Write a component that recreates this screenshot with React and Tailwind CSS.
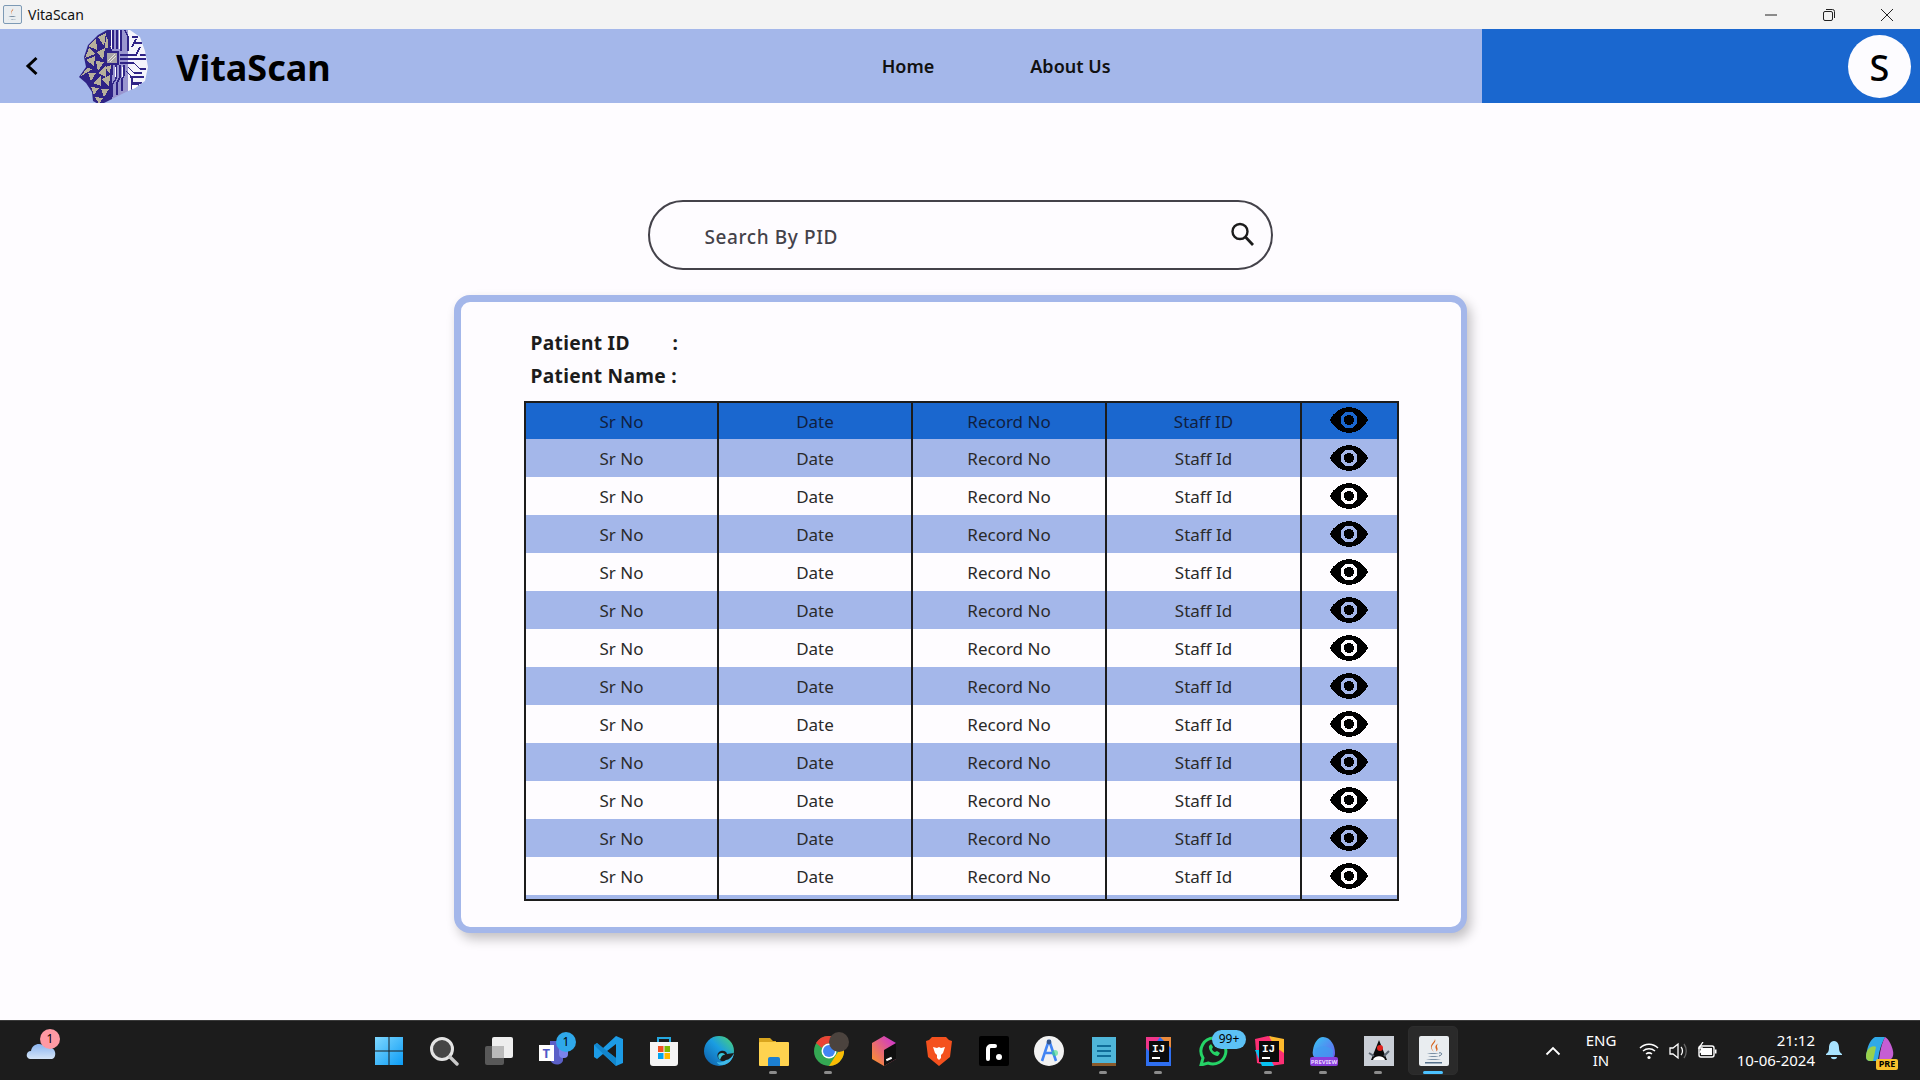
import React from "react";

const FONT = "font-['Noto_Sans',sans-serif]";

const rows = Array.from({ length: 12 }, (_, i) => i);
const COLS = "grid-cols-[193px_194px_194px_195px_95px]";

// Pixel-ish eye, the hole lets the row colour show through
const EyeIcon = () => (
    <svg width="38" height="26" viewBox="0 0 38 26" shapeRendering="crispEdges">
        <path
            fillRule="evenodd"
            d="M0 13C3 6 10 0 19 0s16 6 19 13c-3 7-10 13-19 13S3 20 0 13ZM19 4.500a8.500 8.500 0 1 0 0 17a8.500 8.500 0 1 0 0-17Z"
            fill="#000"
        />
        <circle cx="19" cy="13" r="5.200" fill="#000" />
    </svg>
);

const Logo = () => {
    const tris = [
        "28,19 36,11 37,23", "38,10 46,6 44,19", "25,31 29,21 35,27", "26,33 35,29 34,39",
        "37,25 45,21 43,33", "36,34 44,35 38,44", "21,49 27,41 33,42", "28,46 36,46 31,54",
        "38,46 46,38 46,50", "33,56 41,49 41,59", "42,52 50,48 49,60", "31,60 39,61 34,68",
        "41,62 49,62 44,70", "35,70 43,71 39,77", "46,9 51,20 45,21", "45,40 51,38 50,47",
    ];
    return (
        <svg width="110" height="80" viewBox="0 0 110 80" className="shrink-0" shapeRendering="crispEdges">
            <defs>
                <clipPath id="head">
                    <path d="M47 3 70 3 80 10 85 24 88 40 85 54 75 61 66 65 56 70 40 78 33 74 32 65 26 56 19 50 26 40 24 30 28 18 38 8Z" />
                </clipPath>
            </defs>
            <g clipPath="url(#head)">
                <rect x="15" y="0" width="37" height="80" fill="#2f2386" />
                {tris.map((p) => (
                    <polygon key={p} points={p} fill="#b7b09b" />
                ))}
                <rect x="52" y="0" width="16" height="80" fill="#9a96cf" />
                <rect x="68" y="0" width="24" height="80" fill="#f4f4fb" />
                <path
                    d="M49 3V24M53 3V22M57 3V22M61 3V24M65 3 68 10V24M56 38V52L52 58V70M60 38V50L57 56V68M64 38V48L62 52V64M52 38V48M60 28H76L80 20M60 32H86M60 36H74L80 42H86M68 40 74 46H82M66 44 72 50V60M70 50H84M76 12 72 20M80 28H86M72 56H82M72 10H78M74 16H82"
                    stroke="#2f2386"
                    strokeWidth="1.400"
                    fill="none"
                />
                <path d="M51 3V22M59 3V22M55 40V50M62 40V50" stroke="#fff" strokeWidth="1" fill="none" />
                <rect x="45" y="24" width="14" height="14" fill="#2f2386" />
                <rect x="47" y="26" width="10" height="10" fill="#a9a5a8" />
                <path d="M48 34 55 27M50 35 56 29" stroke="#e8e6e0" strokeWidth="1.200" />
                <rect x="71" y="57" width="7" height="5" fill="#fff" stroke="#2f2386" />
            </g>
        </svg>
    );
};

const Slot = ({ children, dot, active, badge }) => (
    <div className="relative flex h-[60px] w-[55px] shrink-0 items-center justify-center">
        {active && <div className="absolute left-[2px] top-[5px] h-[49px] w-[50px] rounded-[5px] border border-[#2d2d2d] bg-[#2a2a2a]" />}
        <div className="relative h-[30px] w-[30px]">{children}</div>
        {badge}
        {dot && <div className="absolute bottom-[7px] left-[23px] h-[3px] w-[8px] rounded-full bg-[#8c8c8c]" />}
        {active && <div className="absolute bottom-[7px] left-[17px] h-[3px] w-[20px] rounded-full bg-[#4cc2ff]" />}
    </div>
);

const Ico = ({ children }) => (
    <svg width="30" height="30" viewBox="0 0 30 30">
        {children}
    </svg>
);

const IdeaIcon = ({ multi }) => (
    <Ico>
        {multi ? (
            <>
                <polygon points="1,3 14,0 30,6 30,28 16,30 3,27" fill="#fc2f74" />
                <polygon points="15,0 30,3 30,17 20,10" fill="#fdb92c" />
                <polygon points="1,14 8,30 20,30 12,14" fill="#08c3f2" />
            </>
        ) : (
            <rect x="2" y="1" width="25" height="29" fill="#2f6ff0" />
        )}
        {!multi && <polygon points="2,1 16,1 6,16 2,12" fill="#f0368a" />}
        {!multi && <polygon points="16,1 27,1 27,12" fill="#ea8a3c" />}
        <rect x="5" y="5" width="20" height="21" fill="#0b0b0b" />
        <rect x="8" y="21" width="8" height="2" fill="#fff" />
        <text x="8" y="16" fontSize="11" fontWeight="700" fill="#fff" className="font-['Liberation_Mono',monospace]">
            IJ
        </text>
    </Ico>
);

const JavaIcon = () => (
    <Ico>
        <rect x="0" y="0" width="30" height="30" rx="2" fill="#e9edf0" />
        <path d="M16 3c2 4-5 6-3 10 1 2 2 3 2 3-3-3-4-5-2-8 1-2 3-3 3-5Z" fill="#d8631d" />
        <path d="M20 7c-4 2-4 4-3 6 1 1 0 3-1 3 3-1 3-3 2-5 0-2 0-3 2-4Z" fill="#d8631d" />
        <path d="M8 17h12c-2 1-10 1-12 0ZM9 20h11c-2 1-9 1-11 0ZM7 23h15c-3 1-12 1-15 0Z" fill="#55708a" />
        <path d="M20 17c3-1 4 2 0 3" stroke="#55708a" fill="none" />
        <rect x="6" y="26" width="17" height="1.500" fill="#55708a" />
    </Ico>
);

const Taskbar = () => (
    <div className={`flex h-[60px] shrink-0 items-center border-t border-[#3a3a3a] bg-[#1c1c1c] text-white ${FONT}`}>
        {/* Weather */}
        <div className="flex h-full w-[361px] shrink-0 items-center pl-[26px]">
            <div className="relative h-[30px] w-[30px]">
                <svg width="30" height="30" viewBox="0 0 30 30">
                    <defs>
                        <linearGradient id="cloud" x1="0" y1="0" x2="0" y2="1">
                            <stop offset="0" stopColor="#8ab4f0" />
                            <stop offset="1" stopColor="#d4e4f7" />
                        </linearGradient>
                    </defs>
                    <path d="M4 23c-5-1-4-8 1-8 1-8 11-9 14-4 5-1 9 1 10 5 1 4-1 7-3 7Z" fill="url(#cloud)" />
                </svg>
                <div className="absolute left-[14px] top-[-7px] flex h-[20px] w-[20px] items-center justify-center rounded-full bg-[#ff99a4] text-[12px] text-black">
                    1
                </div>
            </div>
        </div>

        {/* Start */}
        <Slot>
            <Ico>
                <defs>
                    <linearGradient id="win" x1="0" y1="0" x2="1" y2="1">
                        <stop offset="0" stopColor="#7fd8ff" />
                        <stop offset="1" stopColor="#0c9cf5" />
                    </linearGradient>
                </defs>
                <path d="M1 1h13.500v13.500H1ZM15.500 1H29v13.500H15.500ZM1 15.500h13.500V29H1ZM15.500 15.500H29V29H15.500Z" fill="url(#win)" />
            </Ico>
        </Slot>
        {/* Search */}
        <Slot>
            <Ico>
                <circle cx="13" cy="13" r="10.500" fill="#454545" stroke="#e4e4e4" strokeWidth="3" />
                <path d="M21 21l7 7" stroke="#c9c9c9" strokeWidth="3.400" strokeLinecap="round" />
            </Ico>
        </Slot>
        {/* Task view */}
        <Slot>
            <Ico>
                <rect x="1" y="10" width="19" height="19" rx="2" fill="#585858" />
                <rect x="8" y="1" width="21" height="21" rx="2" fill="#eeeeee" />
                <rect x="8" y="10" width="12" height="12" fill="#b9b9b9" />
            </Ico>
        </Slot>
        {/* Teams */}
        <Slot
            badge={
                <div className="absolute left-[30px] top-[11px] flex h-[20px] w-[20px] items-center justify-center rounded-full bg-[#2fa8ea] text-[12px] text-black">
                    1
                </div>
            }
        >
            <Ico>
                <path d="M11 5h13v19c0 5-10 7-13 0Z" fill="#5b60c7" />
                <rect x="20" y="10" width="9" height="12" rx="4" fill="#7b83eb" />
                <rect x="0" y="9" width="15" height="16" fill="#fff" />
                <text x="3.500" y="22" fontSize="13" fontWeight="700" fill="#5059c9">
                    T
                </text>
            </Ico>
        </Slot>
        {/* VS Code */}
        <Slot>
            <Ico>
                <path d="M22 0 29 3V27L22 30 9 18 3 23 0 21V9L3 7 9 12ZM22 8 13 15 22 22Z" fill="#1c9be6" />
                <path d="M0 9 3 7 22 22V30L0 9Z" fill="#0f7fc4" opacity="0.75" />
            </Ico>
        </Slot>
        {/* Store */}
        <Slot>
            <Ico>
                <path d="M9 6V2h12v4" fill="none" stroke="#25a8e0" strokeWidth="2" />
                <path d="M1 6h28v21a3 3 0 0 1-3 3H4a3 3 0 0 1-3-3Z" fill="#f4f4f4" />
                <rect x="9" y="10" width="5.500" height="6" fill="#f25022" />
                <rect x="15.500" y="10" width="5.500" height="6" fill="#7fba00" />
                <rect x="9" y="17" width="5.500" height="6" fill="#00a4ef" />
                <rect x="15.500" y="17" width="5.500" height="6" fill="#ffb900" />
            </Ico>
        </Slot>
        {/* Edge */}
        <Slot>
            <Ico>
                <defs>
                    <linearGradient id="edge" x1="0" y1="1" x2="1" y2="0">
                        <stop offset="0" stopColor="#0c59a4" />
                        <stop offset="0.55" stopColor="#1b9de2" />
                        <stop offset="1" stopColor="#4fd86a" />
                    </linearGradient>
                </defs>
                <circle cx="15" cy="15" r="15" fill="url(#edge)" />
                <path d="M30 17c-1 6-9 11-14 7-4-3-3-8 1-9 3-1 6 1 6 3 2 0 5-1 7-1Z" fill="#1c1c1c" />
                <path d="M16 24c-3-3-2-7 2-7 2 0 3 1 3 2-2-1-4 2-5 5Z" fill="#38c6d8" />
                <path d="M22 24c3 0 6-3 8-7-1 7-6 12-12 12-3 0-5-2-5-3 3 1 6 0 9-2Z" fill="#3fb9e8" />
            </Ico>
        </Slot>
        {/* Files */}
        <Slot dot>
            <Ico>
                <path d="M0 2h11l3 3h3v4H0Z" fill="#d9a51e" />
                <rect x="0" y="6" width="30" height="24" rx="1" fill="#ffd34f" />
                <path d="M9 23a2 2 0 0 1 2-2h8a2 2 0 0 1 2 2v7H9Z" fill="#1c7fd1" />
            </Ico>
        </Slot>
        {/* Chrome */}
        <Slot
            dot
            badge={<div className="absolute left-[28px] top-[11px] h-[20px] w-[20px] rounded-full bg-[#4b433e]" />}
        >
            <Ico>
                <circle cx="15" cy="15" r="15" fill="#34a853" />
                <path d="M15 0a15 15 0 0 1 13 7.500H15a7.500 7.500 0 0 0-7 4.500L2 7A15 15 0 0 1 15 0Z" fill="#ea4335" />
                <path d="M28 7.500a15 15 0 0 1-13 22.500l7-11a7.500 7.500 0 0 0 0-11.500Z" fill="#fbbc04" />
                <circle cx="15" cy="15" r="7.500" fill="#fff" />
                <circle cx="15" cy="15" r="6" fill="#4285f4" />
            </Ico>
        </Slot>
        {/* Toolbox */}
        <Slot>
            <Ico>
                <defs>
                    <linearGradient id="tb" x1="0" y1="1" x2="1" y2="0">
                        <stop offset="0" stopColor="#ff9a1f" />
                        <stop offset="1" stopColor="#c92ce0" />
                    </linearGradient>
                </defs>
                <polygon points="15,0 27,7 27,23 15,30 3,23 3,7" fill="url(#tb)" />
                <polygon points="15,14 27,7 27,23 15,30" fill="#0f0f0f" />
                <rect x="17" y="22" width="6" height="2" fill="#fff" transform="rotate(-25 20 23)" />
            </Ico>
        </Slot>
        {/* Brave */}
        <Slot>
            <Ico>
                <path d="M8 1h14l3 3 3 1-2 16-11 9-11-9L2 5l3-1Z" fill="#f4511e" />
                <path d="M9 11l4 1 2-1 2 1 4-1-2 6-2 2v3l-2 2-2-2v-3l-2-2Z" fill="#fff" />
            </Ico>
        </Slot>
        {/* r. */}
        <Slot>
            <Ico>
                <rect x="0" y="0" width="30" height="30" rx="2" fill="#000" />
                <path d="M9 23V13a3 3 0 0 1 3-3h4" fill="none" stroke="#fff" strokeWidth="4" strokeLinecap="round" />
                <circle cx="20" cy="21" r="3" fill="#fff" />
            </Ico>
        </Slot>
        {/* Android Studio */}
        <Slot>
            <Ico>
                <circle cx="15" cy="15" r="15" fill="#f2f2f2" />
                <path d="M15 4 8 25M15 4l7 21M10 17h10" fill="none" stroke="#4285f4" strokeWidth="2.600" />
                <circle cx="15" cy="6" r="2.400" fill="#34568b" />
                <circle cx="21" cy="17" r="3" fill="#3ddc84" opacity="0.6" />
            </Ico>
        </Slot>
        {/* Notepad */}
        <Slot dot>
            <Ico>
                <rect x="3" y="1" width="24" height="27" fill="#4fb6d9" />
                <rect x="3" y="27" width="24" height="3" fill="#8a5a2b" />
                <path d="M8 10h14M8 15h14M8 20h14" stroke="#0f6d99" strokeWidth="2" />
            </Ico>
        </Slot>
        <Slot dot>
            <IdeaIcon />
        </Slot>
        {/* WhatsApp */}
        <Slot
            badge={
                <div className="absolute left-[26px] top-[9px] flex h-[19px] w-[34px] items-center justify-center rounded-full bg-[#5cc1f5] text-[12px] text-black">
                    99+
                </div>
            }
        >
            <Ico>
                <path d="M15 2a13 13 0 0 0-11 20l-2 7 7-2A13 13 0 1 0 15 2Z" fill="none" stroke="#25d366" strokeWidth="3" />
                <path d="M10 10c-1 4 4 10 9 10l2-3-3-2-2 1c-1 0-3-2-3-3l1-2-2-3Z" fill="#25d366" />
            </Ico>
        </Slot>
        <Slot dot>
            <IdeaIcon multi />
        </Slot>
        {/* Edge preview */}
        <Slot dot>
            <Ico>
                <defs>
                    <linearGradient id="ep" x1="0" y1="0" x2="1" y2="1">
                        <stop offset="0" stopColor="#35c9f2" />
                        <stop offset="1" stopColor="#6a5cf0" />
                    </linearGradient>
                </defs>
                <path d="M14 1c8 0 12 9 12 16 0 3-1 5-3 6H7c-3-2-4-5-3-9C5 7 9 1 14 1Z" fill="url(#ep)" />
                <path d="M6 14c4-5 12-5 18 0v7H7Z" fill="#3f9df0" opacity="0.7" />
                <rect x="1" y="21" width="28" height="9" rx="2" fill="#8a3fdc" />
                <text x="15" y="28" textAnchor="middle" fontSize="6" fontWeight="700" fill="#e9d8ff">
                    PREVIEW
                </text>
            </Ico>
        </Slot>
        {/* Duke */}
        <Slot dot>
            <Ico>
                <rect x="0" y="0" width="30" height="30" fill="#c9ced6" />
                <path d="M15 4 23 24H7Z" fill="#0c0c0c" />
                <path d="M9 24c1-5 11-5 12 0Z" fill="#fff" />
                <circle cx="16" cy="12" r="3" fill="#e0211d" />
                <path d="M5 17l5 3M25 15l-5 5" stroke="#5a6470" strokeWidth="2" />
            </Ico>
        </Slot>
        <Slot active>
            <JavaIcon />
        </Slot>

        {/* Tray */}
        <div className="ml-[84px] flex h-full items-center">
            <svg width="16" height="10" viewBox="0 0 16 10" className="shrink-0">
                <path d="M1.500 8.500 8 2l6.500 6.500" fill="none" stroke="#fff" strokeWidth="1.800" />
            </svg>
            <div className="ml-[20px] w-[40px] pb-[2px] text-center text-[15px] leading-[20px]">
                <div>ENG</div>
                <div>IN</div>
            </div>
            <svg width="20" height="18" viewBox="0 0 20 18" className="ml-[18px] shrink-0">
                <path d="M1 6c5-5 13-5 18 0M4 9c3.500-3 8.500-3 12 0M7 12c2-1.500 4-1.500 6 0" fill="none" stroke="#fff" strokeWidth="1.500" />
                <circle cx="10" cy="15.500" r="1.600" fill="#fff" />
            </svg>
            <svg width="20" height="20" viewBox="0 0 20 20" className="ml-[10px] shrink-0">
                <path d="M1 7h3l5-4v14l-5-4H1Z" fill="none" stroke="#fff" strokeWidth="1.300" />
                <path d="M12 6c2 2 2 6 0 8" fill="none" stroke="#fff" strokeWidth="1.300" />
                <path d="M15 3c3 4 3 10 0 14" fill="none" stroke="#666" strokeWidth="1.300" />
            </svg>
            <svg width="20" height="18" viewBox="0 0 20 18" className="ml-[8px] shrink-0">
                <rect x="2" y="4" width="15" height="11" rx="2" fill="none" stroke="#fff" strokeWidth="1.400" />
                <rect x="4" y="6" width="11" height="7" fill="#fff" />
                <rect x="18" y="7.500" width="1.500" height="4" fill="#fff" />
                <path d="M6 0 2 6h3l-2 5" fill="none" stroke="#fff" strokeWidth="1.300" />
            </svg>
            <div className="ml-[10px] w-[88px] pb-[2px] text-right text-[15px] leading-[20px]">
                <div>21:12</div>
                <div>10-06-2024</div>
            </div>
            <svg width="18" height="24" viewBox="0 0 18 24" className="ml-[10px] shrink-0">
                <path d="M9 2c4 0 5 4 5 7 0 3 1 5 3 6v1H1v-1c2-1 3-3 3-6 0-3 1-7 5-7Z" fill="#a8e3ff" />
                <path d="M6 18h6c0 3-6 3-6 0Z" fill="#a8e3ff" />
            </svg>
            <div className="relative ml-[22px] h-[30px] w-[30px] shrink-0">
                <svg width="30" height="30" viewBox="0 0 30 30">
                    <path d="M10 1h10c-4 8-6 14-7 24H5C1 25 0 21 2 15 3 9 6 3 10 1Z" fill="#30a9e8" />
                    <path d="M2 15c2-4 7-6 9-4l-3 14H5C1 25 0 21 2 15Z" fill="#9ad14b" />
                    <path d="M20 1c4 2 7 9 8 14 1 5-1 9-5 9h-9c1-10 3-17 6-23Z" fill="#c55ed4" />
                </svg>
                <div className="absolute bottom-[-4px] right-[-3px] flex h-[11px] w-[22px] items-center justify-center rounded-[2px] bg-[#f8c12c] text-[9px] font-bold text-black">
                    PRE
                </div>
            </div>
        </div>
    </div>
);

const App = () => {
    return (
        <div className={`flex h-screen w-full flex-col overflow-hidden bg-[#fefcff] ${FONT}`}>
            {/* Window title bar */}
            <div className="flex h-[29px] shrink-0 items-center justify-between bg-[#f3f3f3]">
                <div className="flex items-center pl-[3px]">
                    <div className="h-[19px] w-[19px] rounded-[2px] border border-[#7d9ab5] bg-[#e9edf0] p-px">
                        <svg viewBox="0 0 30 30" width="15" height="15">
                            <path d="M16 3c2 4-5 6-3 10 1 2 2 3 2 3-3-3-4-5-2-8 1-2 3-3 3-5Z" fill="#d8631d" />
                            <path d="M7 18h15c-2 2-13 2-15 0ZM7 24h15c-3 1-12 1-15 0Z" fill="#55708a" />
                        </svg>
                    </div>
                    <span className="ml-[6px] text-[14px] text-[#111]">VitaScan</span>
                </div>
                <div className="flex items-center pr-[4px]">
                    <div className="flex w-[58px] justify-center">
                        <svg width="12" height="12" viewBox="0 0 12 12">
                            <path d="M0 6h12" stroke="#222" strokeWidth="1" />
                        </svg>
                    </div>
                    <div className="flex w-[58px] justify-center">
                        <svg width="12" height="12" viewBox="0 0 12 12">
                            <rect x="0.500" y="2.500" width="9" height="9" rx="1.500" fill="none" stroke="#222" />
                            <path d="M3 0.500h6.500a2 2 0 0 1 2 2V9" fill="none" stroke="#222" />
                        </svg>
                    </div>
                    <div className="flex w-[58px] justify-center">
                        <svg width="12" height="12" viewBox="0 0 12 12">
                            <path d="M0 0l12 12M12 0 0 12" stroke="#222" strokeWidth="1" />
                        </svg>
                    </div>
                </div>
            </div>

            {/* App header */}
            <div className="flex h-[74px] shrink-0">
                <div className="relative flex w-[1482px] items-center overflow-hidden bg-[#a4b7ea]">
                    <svg width="14" height="20" viewBox="0 0 14 20" className="ml-[25px] shrink-0">
                        <path d="M11.500 2 3 10l8.500 8" fill="none" stroke="#000" strokeWidth="3" />
                    </svg>
                    <div className="ml-[21px] mt-[2px] h-[80px] w-[110px] shrink-0">
                        <Logo />
                    </div>
                    <span className="ml-[6px] pt-[3px] text-[36px] font-bold leading-none text-black">VitaScan</span>
                    <span className="ml-[551px] text-[18px] font-semibold text-[#111]">Home</span>
                    <span className="ml-[96px] text-[18px] font-semibold text-[#111]">About Us</span>
                </div>
                <div className="flex flex-1 items-center justify-end bg-[#1a67cf] pr-[9px]">
                    <div className="flex h-[63px] w-[63px] items-center justify-center rounded-full bg-[#fdfcff] pt-[3px] text-[36px] font-medium text-black">
                        S
                    </div>
                </div>
            </div>

            {/* Page */}
            <div className="flex flex-1 flex-col items-center pt-[97px]">
                <div className="flex h-[70px] w-[625px] shrink-0 items-center justify-between rounded-full border-2 border-[#44424a] pl-[55px] pr-[16px]">
                    <span className="pt-[5px] text-[19px] font-medium tracking-[0.6px] text-[#44424a]">Search By PID</span>
                    <svg width="26" height="26" viewBox="0 0 26 26" className="mb-[2px]">
                        <circle cx="11" cy="10.500" r="7.500" fill="none" stroke="#1c1c1c" strokeWidth="2.400" />
                        <path d="M16.500 16 24 24" stroke="#1c1c1c" strokeWidth="2.800" />
                    </svg>
                </div>

                <div className="mt-[25px] h-[638px] w-[1013px] shrink-0 rounded-[16px] border-[7px] border-r-[6px] border-b-[6px] border-[#a4b7ea] bg-[#fefcff] pl-[63px] shadow-[4px_6px_12px_rgba(0,0,0,0.24)]">
                    <div className="pl-[7px] pt-[24px] text-[19.2px] font-bold leading-[33px] tracking-[0.3px] text-[#1c1c1c]">
                        <div className="flex">
                            <span className="w-[142px]">Patient ID</span>
                            <span>:</span>
                        </div>
                        <div>Patient Name :</div>
                    </div>

                    <div className="mt-[9px] h-[500px] w-[875px] overflow-hidden border-2 border-[#1c1c1c] text-[17px] font-normal text-[#2a2a2a]">
                        <div className={`grid h-[36px] bg-[#1a67cf] text-[#10203f] ${COLS}`}>
                            {["Sr No", "Date", "Record No", "Staff ID"].map((label) => (
                                <div key={label} className="flex items-center justify-center border-r-2 border-[#1c1c1c] pl-[1px] pt-[1px]">
                                    {label}
                                </div>
                            ))}
                            <div className="flex items-center justify-start pb-[2px] pl-[28px]">
                                <EyeIcon />
                            </div>
                        </div>
                        {rows.map((row) => (
                            <div
                                key={row}
                                className={`grid h-[38px] ${COLS} ${row % 2 === 0 ? "bg-[#a4b7ea]" : "bg-[#fefcff]"}`}
                            >
                                {["Sr No", "Date", "Record No", "Staff Id"].map((label) => (
                                    <div key={label} className="flex items-center justify-center border-r-2 border-[#1c1c1c] pl-[1px] pt-[1px]">
                                        {label}
                                    </div>
                                ))}
                                <div className="flex items-center justify-start pl-[28px]">
                                    <EyeIcon />
                                </div>
                            </div>
                        ))}
                        {/* next row, only its top edge shows */}
                        <div className={`grid h-[4px] bg-[#a4b7ea] ${COLS}`}>
                            <div className="border-r-2 border-[#1c1c1c]" />
                            <div className="border-r-2 border-[#1c1c1c]" />
                            <div className="border-r-2 border-[#1c1c1c]" />
                            <div className="border-r-2 border-[#1c1c1c]" />
                        </div>
                    </div>
                </div>
            </div>

            <div className="-mt-px">
                <Taskbar />
            </div>
        </div>
    );
};

export default App;
